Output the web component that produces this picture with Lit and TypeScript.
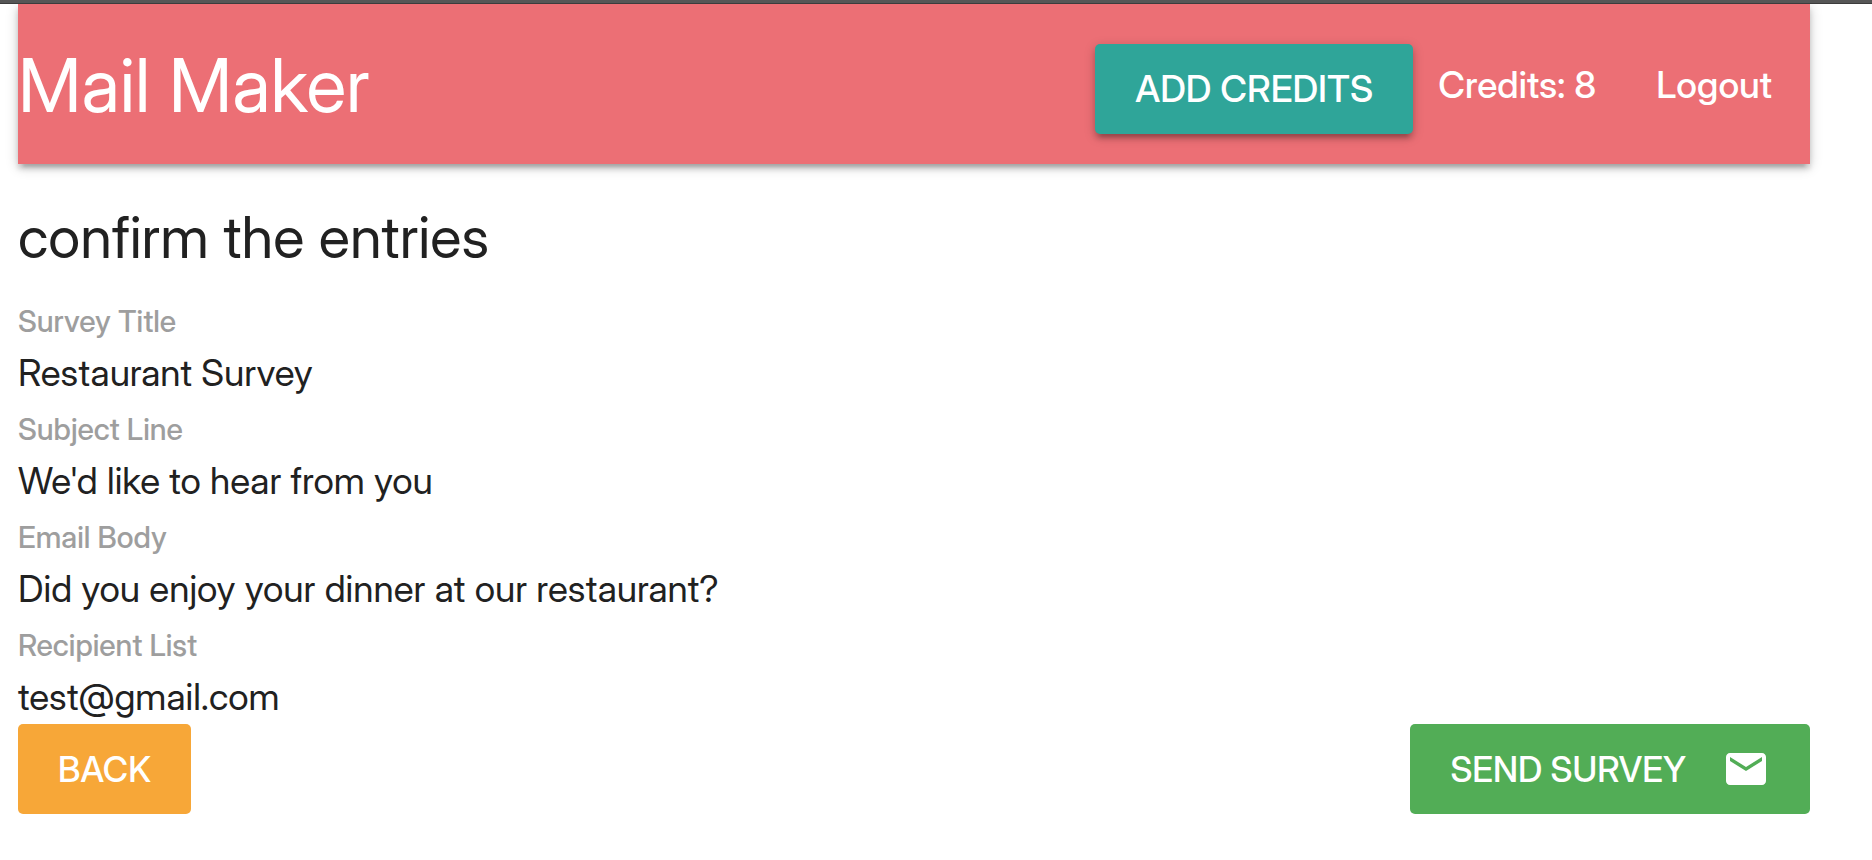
import { LitElement, html, css } from "lit";
import { customElement, property } from "lit/decorators.js";

interface Entry {
  label: string;
  value: string;
}

@customElement("mail-header")
export class MailHeader extends LitElement {
  @property({ type: Number }) credits = 0;

  static styles = css`
    :host {
      display: block;
    }
    .bar {
      display: flex;
      justify-content: space-between;
      align-items: center;
      min-height: 160px;
      background: #ec6f75;
      color: #fff;
      box-shadow: 0 5px 5px rgba(0, 0, 0, 0.14), 0 8px 3px -5px rgba(0, 0, 0, 0.12),
        0 3px 12px rgba(0, 0, 0, 0.2);
    }
    .brand {
      padding-top: 2px;
      color: inherit;
      text-decoration: none;
      font-size: 74px;
      line-height: 90px;
    }
    .links {
      display: flex;
      align-items: center;
      margin: 0;
      padding: 2px 38px 0 0;
      list-style: none;
      font-size: 37px;
      font-weight: 500;
      line-height: 54px;
    }
    .credits {
      margin: 0 60px 0 25px;
    }
    .link {
      color: inherit;
      text-decoration: none;
    }
    .add {
      display: block;
      height: 90px;
      margin-top: 8px;
      padding: 0 40px;
      border: 0;
      border-radius: 5px;
      background: #2fa599;
      color: #fff;
      font: inherit;
      text-transform: uppercase;
      cursor: pointer;
      box-shadow: 0 5px 5px rgba(0, 0, 0, 0.14), 0 8px 3px -5px rgba(0, 0, 0, 0.12),
        0 3px 12px rgba(0, 0, 0, 0.2);
    }
  `;

  render() {
    return html`
      <nav class="bar">
        <a class="brand" href="#">Mail Maker</a>
        <ul class="links">
          <li><button class="add" type="button">Add Credits</button></li>
          <li class="credits">Credits: ${this.credits}</li>
          <li><a class="link" href="#logout">Logout</a></li>
        </ul>
      </nav>
    `;
  }
}

@customElement("survey-review")
export class SurveyReview extends LitElement {
  @property({ attribute: false }) entries: Entry[] = [];

  static styles = css`
    :host {
      display: block;
    }
    .title {
      margin: 41px 0 21px;
      font-size: 58px;
      font-weight: 400;
      line-height: 64px;
    }
    .entries {
      margin: 0;
      font-size: 37px;
    }
    .label {
      padding-top: 4px;
      color: #9e9e9e;
      font-size: 30px;
      font-weight: 500;
      line-height: 54px;
    }
    .value {
      margin: 0;
      line-height: 50px;
    }
    .actions {
      display: flex;
      justify-content: space-between;
      margin-top: 2px;
    }
    .button {
      display: flex;
      align-items: center;
      gap: 36px;
      height: 90px;
      padding: 0 40px;
      border: 0;
      border-radius: 5px;
      color: #fff;
      font: inherit;
      font-size: 35px;
      font-weight: 500;
      text-transform: uppercase;
      cursor: pointer;
    }
    .back {
      background: #f7a738;
    }
    .send {
      background: #52ad56;
    }
    .icon {
      width: 48px;
      height: 48px;
      fill: currentColor;
    }
  `;

  render() {
    return html`
      <h5 class="title">confirm the entries</h5>
      <dl class="entries">
        ${this.entries.map(
          (entry) => html`
            <dt class="label">${entry.label}</dt>
            <dd class="value">${entry.value}</dd>
          `
        )}
      </dl>
      <div class="actions">
        <button class="button back" type="button">Back</button>
        <button class="button send" type="button">
          Send Survey
          <svg class="icon" viewBox="0 0 24 24" aria-hidden="true">
            <path
              d="M20 4H4c-1.1 0-1.99.9-1.99 2L2 18c0 1.1.9 2 2 2h16c1.1 0 2-.9 2-2V6c0-1.1-.9-2-2-2zm0 4l-8 5-8-5V6l8 5 8-5v2z"
            />
          </svg>
        </button>
      </div>
    `;
  }
}

@customElement("app-root")
export class AppRoot extends LitElement {
  static styles = css`
    :host {
      display: block;
      min-height: 100vh;
      background: #fff;
      color: #212121;
      font-family: "Inter Display", Inter, "Liberation Sans", sans-serif;
    }
    .edge {
      position: relative;
      z-index: 1;
      box-sizing: border-box;
      height: 4px;
      background: #565656;
      border-bottom: 1px solid #3c3c3c;
    }
    .page {
      margin: 0 62px 0 18px;
    }
  `;

  private entries: Entry[] = [
    { label: "Survey Title", value: "Restaurant Survey" },
    { label: "Subject Line", value: "We'd like to hear from you" },
    { label: "Email Body", value: "Did you enjoy your dinner at our restaurant?" },
    { label: "Recipient List", value: "test@gmail.com" },
  ];

  render() {
    return html`
      <div class="edge"></div>
      <div class="page">
        <mail-header .credits=${8}></mail-header>
        <survey-review .entries=${this.entries}></survey-review>
      </div>
    `;
  }
}
